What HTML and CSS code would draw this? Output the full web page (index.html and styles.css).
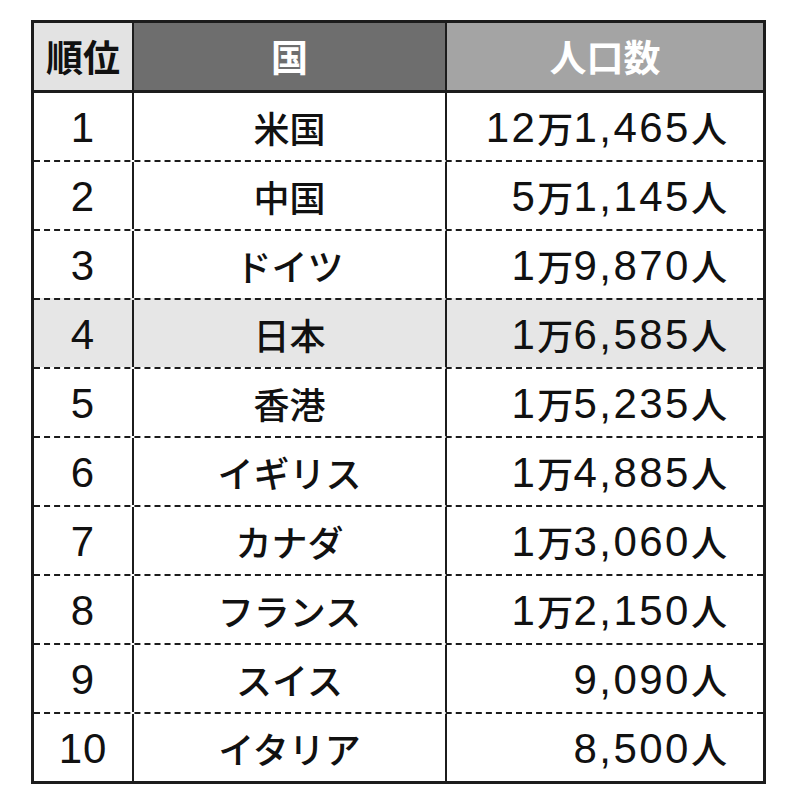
FILE: index.html
```html
<!DOCTYPE html>
<html lang="ja">
<head>
<meta charset="utf-8">
<link rel="stylesheet" href="styles.css">
</head>
<body>
<div class="tbl">
  <div class="row head">
    <div class="c c1">順位</div>
    <div class="c c2">国</div>
    <div class="c c3">人口数</div>
  </div>
  <div class="row first"><div class="c c1"><span class="n">1</span></div><div class="c c2">米国</div><div class="c c3"><span class="n">12</span>万<span class="n">1,465</span>人</div></div>
  <div class="row"><div class="c c1"><span class="n">2</span></div><div class="c c2">中国</div><div class="c c3"><span class="n">5</span>万<span class="n">1,145</span>人</div></div>
  <div class="row"><div class="c c1"><span class="n">3</span></div><div class="c c2">ドイツ</div><div class="c c3"><span class="n">1</span>万<span class="n">9,870</span>人</div></div>
  <div class="row hl"><div class="c c1"><span class="n">4</span></div><div class="c c2">日本</div><div class="c c3"><span class="n">1</span>万<span class="n">6,585</span>人</div></div>
  <div class="row"><div class="c c1"><span class="n">5</span></div><div class="c c2">香港</div><div class="c c3"><span class="n">1</span>万<span class="n">5,235</span>人</div></div>
  <div class="row"><div class="c c1"><span class="n">6</span></div><div class="c c2">イギリス</div><div class="c c3"><span class="n">1</span>万<span class="n">4,885</span>人</div></div>
  <div class="row"><div class="c c1"><span class="n">7</span></div><div class="c c2">カナダ</div><div class="c c3"><span class="n">1</span>万<span class="n">3,060</span>人</div></div>
  <div class="row"><div class="c c1"><span class="n">8</span></div><div class="c c2">フランス</div><div class="c c3"><span class="n">1</span>万<span class="n">2,150</span>人</div></div>
  <div class="row"><div class="c c1"><span class="n">9</span></div><div class="c c2">スイス</div><div class="c c3"><span class="n">9,090</span>人</div></div>
  <div class="row"><div class="c c1"><span class="n">10</span></div><div class="c c2">イタリア</div><div class="c c3"><span class="n">8,500</span>人</div></div>
</div>
</body>
</html>
```
FILE: styles.css
```css
html, body {
  margin: 0;
  padding: 0;
  background: #ffffff;
}
body {
  font-family: "Noto Sans CJK JP", "Noto Sans", sans-serif;
  color: #111111;
}
.tbl {
  margin: 20px 0 0 31px;
  width: 729px;
  border: 3px solid #1c1c1c;
}
.row {
  display: flex;
  height: 67px;
}
.row + .row {
  border-top: 2px dashed #1c1c1c;
}
.row.first {
  border-top: 3px solid #1c1c1c;
}
.row.hl {
  background: #e6e6e6;
}
.c {
  display: flex;
  align-items: center;
  font-size: 36px;
  font-weight: 500;
  line-height: 1;
  white-space: nowrap;
}
.n {
  font-family: "Liberation Sans", "Noto Sans", sans-serif;
  font-size: 42px;
  font-weight: 400;
  letter-spacing: 2.5px;
  position: relative;
  top: 1px;
}
.c1 {
  width: 98px;
  justify-content: center;
}
.c1 .n {
  letter-spacing: 1px;
}
.c2 {
  width: 311px;
  justify-content: center;
  border-left: 2px solid #1c1c1c;
}
.c3 {
  width: 318px;
  justify-content: flex-end;
  padding-right: 36px;
  box-sizing: border-box;
  border-left: 2px solid #1c1c1c;
}
.head .c {
  font-weight: 700;
  font-size: 37px;
}
.head .c1 {
  background: #e3e3e3;
  color: #111111;
}
.head .c2 {
  background: #6e6e6e;
  color: #ffffff;
}
.head .c3 {
  background: #a4a4a4;
  color: #ffffff;
  justify-content: center;
  padding-right: 0;
}
```
